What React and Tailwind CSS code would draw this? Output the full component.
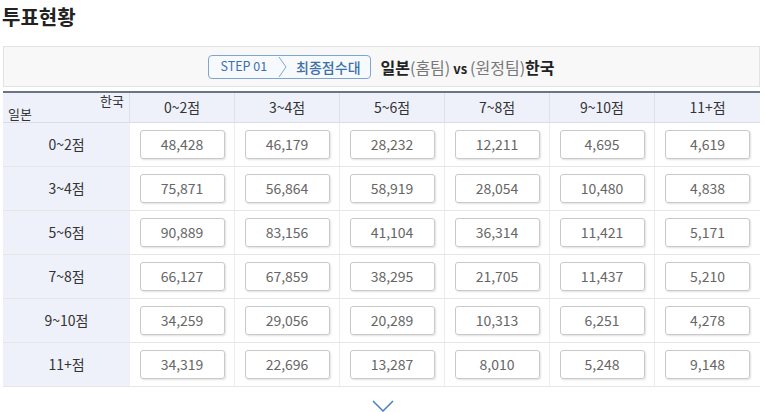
import React from "react";

const cols = ["0~2점", "3~4점", "5~6점", "7~8점", "9~10점", "11+점"];
const rows = [
  ["0~2점", ["48,428", "46,179", "28,232", "12,211", "4,695", "4,619"]],
  ["3~4점", ["75,871", "56,864", "58,919", "28,054", "10,480", "4,838"]],
  ["5~6점", ["90,889", "83,156", "41,104", "36,314", "11,421", "5,171"]],
  ["7~8점", ["66,127", "67,859", "38,295", "21,705", "11,437", "5,210"]],
  ["9~10점", ["34,259", "29,056", "20,289", "10,313", "6,251", "4,278"]],
  ["11+점", ["34,319", "22,696", "13,287", "8,010", "5,248", "9,148"]],
];

export default function App() {
  return (
    <div
      className="w-[765px] h-[412px] bg-white overflow-hidden px-[3px] text-[#333]"
      style={{ fontFamily: '"Noto Sans CJK KR", "Noto Sans", sans-serif' }}
    >
      <h1 className="text-[20px] font-bold leading-[26px] pt-[4px] -ml-[1px] text-[#222]">투표현황</h1>
      <div className="mt-[16px] w-[757px] h-[41px] border border-[#e3e3e3] bg-[#f8f8f8] flex items-center justify-center">
        <div className="flex items-center h-[24px] border border-[#7ea6d3] rounded-[4px] bg-[#f7fafd] text-[#3d6fa8]">
          <span className="text-[12.5px] pl-[11px] pr-[11px] leading-none">STEP 01</span>
          <svg width="10" height="24" viewBox="0 0 10 24" className="block">
            <path d="M1 2 L8 12 L1 22" fill="none" stroke="#7ea6d3" strokeWidth="1" />
          </svg>
          <span className="text-[14px] pl-[8px] pr-[9px] leading-none font-medium">최종점수대</span>
        </div>
        <div className="ml-[10px] text-[16px] leading-none text-[#222]">
          <span className="font-bold">일본</span>
          <span className="text-[#777]">(홈팀)</span>
          <span className="font-bold text-[13px]"> vs </span>
          <span className="text-[#777]">(원정팀)</span>
          <span className="font-bold">한국</span>
        </div>
      </div>
      <div className="mt-[4px] w-[757px] border-t-2 border-[#6b7483]">
        <div className="grid grid-cols-[127px_repeat(6,105px)] h-[30px] bg-[#eef1fa] border-b border-[#d9dce4]">
          <div className="relative border-r border-[#dde0e8]">
            <span className="absolute right-[5px] top-[0px] text-[13px] leading-[16px]">한국</span>
            <span className="absolute left-[5px] bottom-[0px] text-[13px] leading-[16px]">일본</span>
          </div>
          {cols.map((c, i) => (
            <div
              key={c}
              className={`flex items-center justify-center text-[14px] ${i < 5 ? "border-r border-[#dde0e8]" : ""}`}
            >
              {c}
            </div>
          ))}
        </div>
        {rows.map(([label, vals]) => (
          <div
            key={label}
            className="grid grid-cols-[127px_repeat(6,105px)] h-[44px] border-b border-[#e6e6e6]"
          >
            <div className="flex items-center justify-center bg-[#eef1fa] text-[14px]">{label}</div>
            {vals.map((v, i) => (
              <div
                key={i}
                className={`flex items-center justify-center ${i < 5 ? "border-r border-[#ececec]" : ""}`}
              >
                <div className="w-[85px] h-[29px] border border-[#c9c9c9] rounded-[3px] shadow-[1px_1px_2px_rgba(0,0,0,0.12)] flex items-center justify-center text-[14px] text-[#666]">
                  {v}
                </div>
              </div>
            ))}
          </div>
        ))}
      </div>
      <div className="flex justify-center mt-[13px]">
        <svg width="22" height="12" viewBox="0 0 22 12">
          <path d="M1 1 L11 11 L21 1" fill="none" stroke="#4a7fc1" strokeWidth="1.5" />
        </svg>
      </div>
    </div>
  );
}
